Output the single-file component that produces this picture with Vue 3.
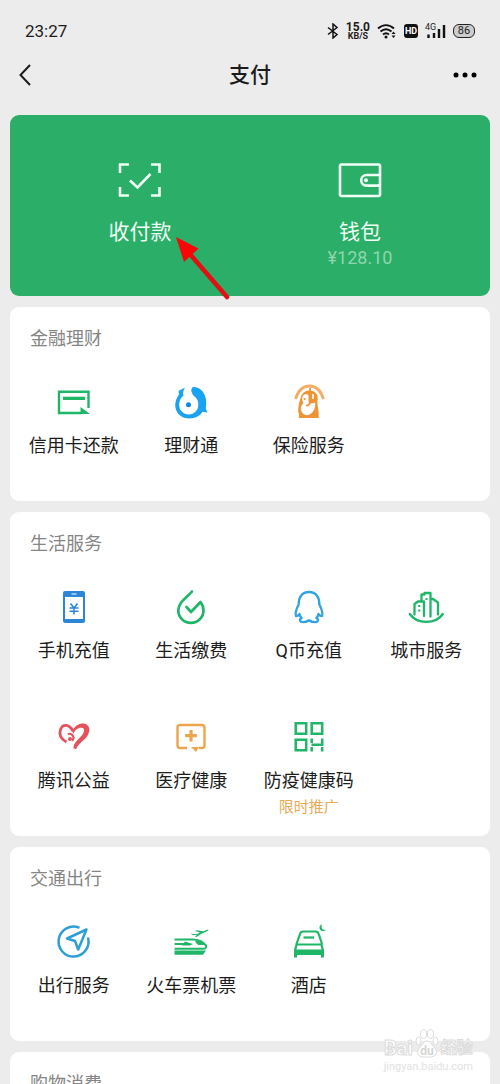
<script setup>
const green = '#1fb667'

const icons = {
  card: `<path d="M34.500 26V9.700H5V31h22" fill="none" stroke="${green}" stroke-width="2.400"/><path d="M9 14.700h22v3.300H9z" fill="${green}"/><path d="M26.500 25l9.500 7h-9.500z" fill="${green}"/>`,
  fund: `<path d="M14 5.500L7.500 9l.500 3.500C2 20 3.500 30 10 34.200c7 4 17.500 2.500 21.500-4.500l5 .800-1.700-4C37 15 32 5 22 5c-2.500 1.500-2 5.500.500 8.500 3.500 2.500 5 5.500 4.800 9.500a9.600 9.600 0 0 1-19.200 0c0-4.500 2-7.500 4.400-9.500C11.500 11 12.500 8 14 5.500z" fill="#1aa3f0"/><circle cx="17.500" cy="22.700" r="2.500" fill="#1485dd"/>`,
  insurance: `<path d="M6.500 17C9 8.500 13.500 4 20.500 4S32 8.500 34.500 17" fill="none" stroke="#f3ae67" stroke-width="2.800"/><path d="M12 14.500C13.500 10.500 17 8.500 20.500 8.500s7 2 8 5.500c.7 3.500-.500 5 0 8 .5 4 1.500 8 1.200 14H9.500c1.500-2 0-4-.300-7 0-5 1.300-10 2.800-14.500z" fill="#ee9436"/><path d="M14 13.500c1.700-1.700 4-1.700 5.500-.500v6.500c0 2 4 2.500 6.500 1 1 5-1.500 10.500-6.500 12.500-5 1-8.500-3.500-7.500-8 .4-2 2-3 2.500-4-1.500-2-2-5-.500-7.500z" fill="#fff"/><path d="M21 6v14c-.500 3-2 4-4 3.500" fill="none" stroke="#ee9436" stroke-width="1.800"/><path d="M24 12v5" stroke="#fff" stroke-width="1.600"/><circle cx="15.500" cy="17" r="1.100" fill="#ee9436"/>`,
  phone: `<rect x="9" y="4" width="22" height="32" rx="2" fill="#2b86d8"/><path d="M11 10h18v22H11z" fill="#fff"/><path d="M17.500 7h5" stroke="#fff" stroke-width="1"/><path d="M16.500 16.500l3.500 4.500 3.500-4.500M20 21v6.500M15.500 21h9M15.500 24.200h9" fill="none" stroke="#2b86d8" stroke-width="1.500"/>`,
  bills: `<path d="M21 4.500C16 10.500 7.300 15 7.300 23.500A12.500 12.200 0 0 0 32.500 23.500c0-3.500-1-6-3-8.500L20 25l-4.500-5" fill="none" stroke="${green}" stroke-width="2.700" stroke-linecap="round" stroke-linejoin="round"/>`,
  qcoin: `<path d="M20 5C13 5 9.500 10 9.700 17.500 8 21 5.500 25.500 7 29c1.500.500 2.500-1 3.500-2 .3 1.800 1.200 3 2.200 4-3 1.500-2 4 1.300 4.200 2.300.1 4-.700 6-2 2 1.300 3.700 2.100 6 2 3.300-.200 4.300-2.700 1.300-4.200 1-1 1.900-2.200 2.200-4 1 1 2 2.500 3.500 2 1.500-3.500-1-8-2.700-11.500C30.500 10 27 5 20 5z" fill="none" stroke="#32a3dd" stroke-width="2.300" stroke-linejoin="round"/>`,
  city: `<g fill="none" stroke="${green}" stroke-width="2.300" stroke-linecap="round" stroke-linejoin="round"><path d="M8.500 27.500V17l3.500-2.500h6V29"/><path d="M15.500 13.500V7.500h3V6h6v23.500"/><path d="M25.500 12h1.500l5 3.500v12"/><path d="M3.800 27c7 10.500 26 10.500 33 0"/></g><path d="M12.200 18h2v2h-2zM12.200 22.500h2v2h-2zM19.500 11h2v2h-2z" fill="${green}"/>`,
  heart: `<path d="M12.500 25C7 22 4.700 17.500 6.500 12.500 9 6 15.500 7.500 19 14" fill="none" stroke="#e6525c" stroke-width="2.800"/><path d="M18 14c3-5.500 8-8.800 13-7.200 5 1.700 5.500 7 2.500 12-3 4.700-8.500 7-11.500 13.500l-2.500-1c0-6 5-8.500 8.500-13 3-4 3-7-.500-7.500-3.500-.300-6.500 2.200-8.200 6z" fill="#e6525c"/><path d="M14 17.500c1.500-1.500 4-.500 5 1.500 1 1.500.5 3.500-1 4.500" fill="none" stroke="#e6525c" stroke-width="2.200"/><circle cx="16" cy="22" r="2" fill="#e6525c"/>`,
  medical: `<path d="M16 31H9q-2.500 0-2.500-2.500V10.500Q6.500 8 9 8h22q2.500 0 2.500 2.500v18Q33.500 31 31 31h-3" fill="none" stroke="#eda54c" stroke-width="2.400"/><path d="M20 30h8l-3 5z" fill="#eda54c"/><path d="M20 13v11.500M14.200 18.700h11.600" stroke="#eda54c" stroke-width="3.200"/>`,
  qr: `<g fill="none" stroke="${green}" stroke-width="2.500"><path d="M6.700 6.200h10.500v10.500H6.700zM22.700 6.200h10.500v10.500H22.700zM6.700 22.700h10.500v10.500H6.700z"/><path d="M22.700 21.500v4.500M22.700 34.500v-4.500M33.200 21.500v6.200H22.500M33.200 30v4.500"/></g>`,
  travel: `<g fill="none" stroke="#2c9fd6" stroke-width="2.500" stroke-linejoin="round"><path d="M25.500 5.800A15 15 0 1 0 34 15.500"/><path d="M32.500 7.500L13 16.500l8 2.500 3.200 8.500z"/></g>`,
  train: `<g fill="none" stroke="${green}" stroke-width="2"><path d="M3.500 17.500H22c6 0 10 2.500 13 6 1 2-.500 3.300-3 3.300H3.500"/><path d="M3.500 22H14"/></g><path d="M24 18.500c4 0 7 2 9.500 4.500h-6c-1.500-1-3-2.500-3.500-4.500zM14 19.500l8 2.500-3 1.500h-8z" fill="${green}"/><path d="M3.500 28.500H35l-3 4.300H3.500z" fill="${green}"/><path d="M19.500 11.500l2.500.500h4l3-1.200-5-2 2-.500 6.500.900 3.500-1.400c1.700-.500 2 .4.500 1.200L30 12l-4.500 3-1.500-.300 2-2-4 .500z" fill="${green}"/>`,
  hotel: `<g fill="none" stroke="${green}" stroke-width="2.200"><path d="M7.500 22l3.500-10q.700-2.500 3-2.500h12.500q2.500 0 3.200 2.500L33 22"/><path d="M14.500 15.500H25"/><path d="M6 29l1.500-6.500h25L34 29"/></g><path d="M5 27.500h30v8h-3V33H8v2.500H5z" fill="${green}"/><path d="M33 2.500c-1.500 3.500.500 6 4 5.300-2.500 3-7 .700-6.500-2.800.2-1.200 1-2.200 2.500-2.500z" fill="${green}"/>`,
}

const sections = [
  {
    title: '金融理财',
    items: [
      { label: '信用卡还款', icon: 'card' },
      { label: '理财通', icon: 'fund' },
      { label: '保险服务', icon: 'insurance' },
    ],
  },
  {
    title: '生活服务',
    items: [
      { label: '手机充值', icon: 'phone' },
      { label: '生活缴费', icon: 'bills' },
      { label: 'Q币充值', icon: 'qcoin' },
      { label: '城市服务', icon: 'city' },
      { label: '腾讯公益', icon: 'heart' },
      { label: '医疗健康', icon: 'medical' },
      { label: '防疫健康码', icon: 'qr', note: '限时推广' },
    ],
  },
  {
    title: '交通出行',
    items: [
      { label: '出行服务', icon: 'travel' },
      { label: '火车票机票', icon: 'train' },
      { label: '酒店', icon: 'hotel' },
    ],
  },
  { title: '购物消费', items: [] },
]
</script>

<template>
  <div class="page">
    <div class="status">
      <span class="time">23:27</span>
      <div class="indicators">
        <svg width="12" height="16" viewBox="0 0 12 16"><path d="M1 4.500l9 7L6 15V1l4 3.500-9 7" fill="none" stroke="#111" stroke-width="1.500" /></svg>
        <span class="rate"><b>15.0</b><b class="unit">KB/S</b></span>
        <svg width="20" height="16" viewBox="0 0 20 16">
          <path d="M1 5.500c5-4.500 11-4.500 16 0M3.500 8.500c3.500-3 7.500-3 11 0M6 11.500c2-1.700 4-1.700 6 0" fill="none" stroke="#111" stroke-width="1.900" />
          <circle cx="9" cy="14" r="1.500" fill="#111" />
          <path d="M14.500 11l2-2.500 2 2.500zM14.500 12.500l2 2.500 2-2.500z" fill="#111" />
        </svg>
        <span class="hd">HD</span>
        <span class="signal">
          <span class="net">4G</span>
          <svg width="21" height="16" viewBox="0 0 21 16"><path d="M3.500 11.500V15M9 10v5M14 6v9M19 2v13" stroke="#111" stroke-width="2.400" /></svg>
        </span>
        <span class="battery">86</span>
      </div>
    </div>

    <header class="nav">
      <button class="nav-btn" aria-label="返回">
        <svg width="14" height="24" viewBox="0 0 14 24"><path d="M12 2L2.500 12 12 22" fill="none" stroke="#1c1c1c" stroke-width="2" /></svg>
      </button>
      <h1>支付</h1>
      <button class="nav-btn more" aria-label="更多">
        <svg width="24" height="24" viewBox="0 0 24 24"><circle cx="3" cy="12" r="2.500" /><circle cx="12" cy="12" r="2.500" /><circle cx="21" cy="12" r="2.500" /></svg>
      </button>
    </header>

    <main>
      <section class="hero">
        <button class="pay">
          <svg width="48" height="40" viewBox="0 0 48 40" fill="none" stroke="#effff5" stroke-width="2.600">
            <path d="M4 13V4.500h9M35 4.500h8.500V13M43.500 27v8.500H35M13 35.500H4V27" />
            <path d="M14 20.500l7.500 7L34.500 14" />
          </svg>
          <span class="pay-label">收付款</span>
        </button>
        <button class="pay">
          <svg width="48" height="40" viewBox="0 0 48 40" fill="none" stroke="#effff5" stroke-width="2.600">
            <rect x="4" y="4.500" width="40" height="31.500" rx="1.500" />
            <path d="M44 15H30.500a5.300 5.300 0 0 0 0 10.600H44" />
            <circle cx="30" cy="20.300" r="2" fill="#effff5" stroke="none" />
          </svg>
          <span class="pay-label">钱包</span>
          <span class="amount">¥128.10</span>
        </button>
        <svg class="pointer" width="56" height="66" viewBox="0 0 56 66">
          <path d="M13 16L51 60" stroke="#e30f12" stroke-width="4.500" stroke-linecap="round" />
          <path d="M0 0l22.500 11.500L8 25z" fill="#fb0606" />
        </svg>
      </section>

      <section v-for="s in sections" :key="s.title" class="card">
        <h2>{{ s.title }}</h2>
        <div class="grid">
          <button v-for="item in s.items" :key="item.label" class="item">
            <svg width="40" height="40" viewBox="0 0 40 40" aria-hidden="true" v-html="icons[item.icon]"></svg>
            <span class="label">{{ item.label }}</span>
            <span v-if="item.note" class="note">{{ item.note }}</span>
          </button>
        </div>
      </section>
    </main>

    <div class="watermark">
      <div class="brand">
        <span>Bai</span>
        <svg width="28" height="32" viewBox="0 0 24 32">
          <g fill="#fff" stroke="#dcdcdc" stroke-width="1">
            <ellipse cx="3.500" cy="13" rx="2.500" ry="4" /><ellipse cx="8.500" cy="6" rx="3" ry="4.500" /><ellipse cx="15.500" cy="6" rx="3" ry="4.500" /><ellipse cx="20.500" cy="13" rx="2.500" ry="4" />
            <path d="M12 13c4 0 5 5 8.500 8 3 5-1 9-8.500 8-7.500 1-11.500-3-8.500-8C7 18 8 13 12 13z" />
          </g>
          <text class="du" x="12" y="27" text-anchor="middle">du</text>
        </svg>
        <span class="brand-cn">经验</span>
      </div>
      <div class="site">jingyan.baidu.com</div>
    </div>
  </div>
</template>

<style>
body {
  margin: 0;
  background: #ececec;
}
</style>

<style scoped>
.page {
  position: relative;
  height: 100vh;
  overflow: hidden;
  background: #ececec;
  color: #1c1c1c;
  font-family: Roboto, "Noto Sans CJK SC", sans-serif;
}
button {
  padding: 0;
  border: 0;
  background: none;
  color: inherit;
  font: inherit;
}
svg {
  display: block;
}
.status {
  display: flex;
  align-items: center;
  justify-content: space-between;
  height: 40px;
  padding: 11px 25px 0;
}
.time {
  font-size: 17px;
  line-height: 40px;
}
.indicators {
  display: flex;
  align-items: center;
  gap: 7px;
}
.rate {
  display: flex;
  flex-direction: column;
  align-items: center;
  font-size: 12px;
  line-height: 10px;
}
.rate .unit {
  font-size: 9px;
  line-height: 8px;
}
.hd {
  width: 14px;
  border-radius: 3px;
  background: #111;
  color: #fff;
  font-size: 9px;
  font-weight: 700;
  line-height: 14px;
  text-align: center;
}
.signal {
  position: relative;
}
.net {
  position: absolute;
  top: 0;
  left: 0;
  font-size: 9px;
  line-height: 9px;
}
.battery {
  width: 20px;
  border: 1px solid #222;
  border-radius: 6px;
  background: #ccc;
  font-size: 11px;
  line-height: 12px;
  text-align: center;
}
.nav {
  display: grid;
  grid-template-columns: 1fr auto 1fr;
  align-items: center;
  height: 50px;
  padding: 0 23px 0 18px;
  margin-top: -1px;
}
.nav-btn {
  display: flex;
  width: 24px;
}
.more {
  justify-self: end;
}
h1 {
  margin: 0;
  padding-left: 5px;
  font-size: 21px;
  font-weight: 500;
  line-height: 30px;
}
main {
  display: flex;
  flex-direction: column;
  gap: 11px;
  padding: 15px 10px 0;
}
.hero {
  position: relative;
  display: grid;
  grid-template-columns: 1fr 1fr;
  height: 181px;
  padding: 0 20px;
  box-sizing: border-box;
  border-radius: 9px;
  background: #2bae67;
  color: #effff5;
}
.pay {
  display: flex;
  flex-direction: column;
  align-items: center;
  padding-top: 45px;
}
.pay-label {
  margin-top: 17px;
  font-size: 21px;
  line-height: 30px;
}
.amount {
  color: #8fd5ae;
  font-size: 18px;
  line-height: 22px;
}
.pointer {
  position: absolute;
  top: 122px;
  left: 166px;
}
.card {
  padding: 21px 5px 9px;
  border-radius: 9px;
  background: #fff;
}
h2 {
  margin: 0 0 12px;
  padding-left: 15px;
  color: #858585;
  font-size: 18px;
  font-weight: 400;
  line-height: 22px;
}
.grid {
  display: grid;
  grid-template-columns: repeat(4, 1fr);
  grid-auto-rows: 130px;
}
.item {
  display: flex;
  flex-direction: column;
  align-items: center;
  padding-top: 20px;
}
.label {
  margin-top: 12px;
  font-size: 18px;
  line-height: 24px;
  white-space: nowrap;
}
.note {
  margin-top: 4px;
  color: #e9ab55;
  font-size: 15px;
  line-height: 20px;
}
.watermark {
  position: absolute;
  right: 27px;
  bottom: 10px;
  display: flex;
  flex-direction: column;
  align-items: center;
}
.brand {
  display: flex;
  align-items: flex-end;
  color: #fff;
  font-size: 20px;
  font-weight: 700;
  line-height: 24px;
  -webkit-text-stroke: 1px #dcdcdc;
}
.brand-cn {
  font-size: 16px;
}
.du {
  fill: #d5d5d5;
  font-size: 12px;
  -webkit-text-stroke: 0;
}
.site {
  color: #e2e2e2;
  font-size: 11px;
  line-height: 14px;
}
</style>
